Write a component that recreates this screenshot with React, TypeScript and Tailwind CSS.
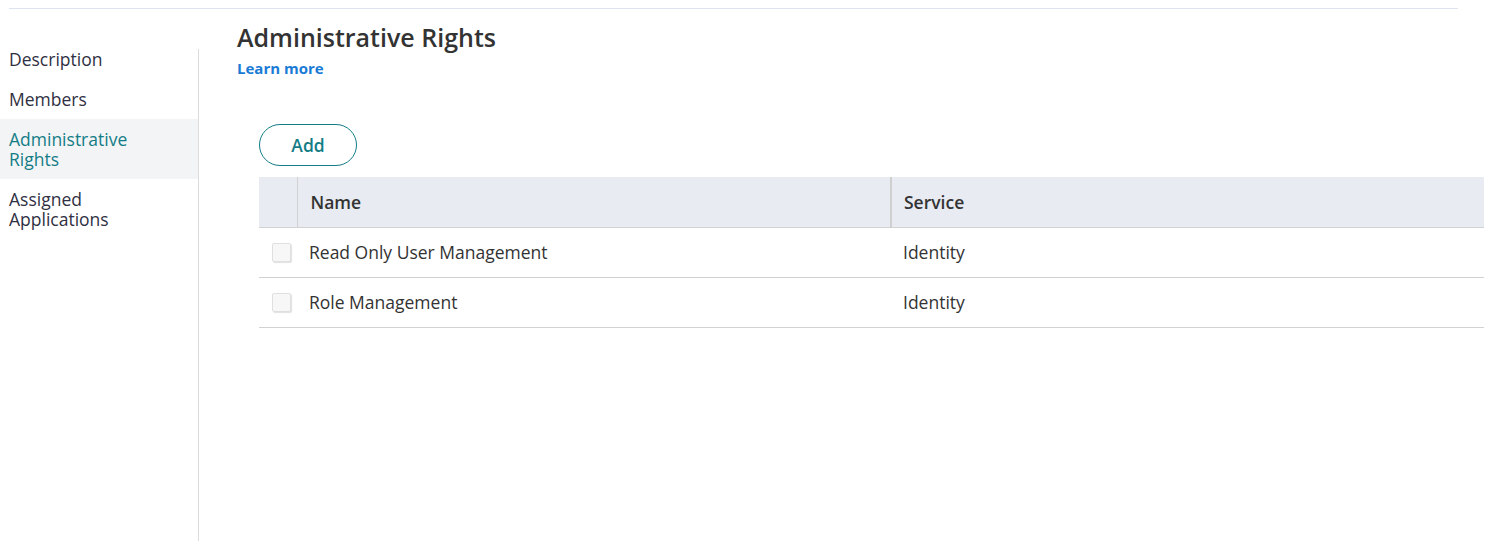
const navItems = ["Description", "Members", "Administrative Rights", "Assigned Applications"];

const rights = [
  { name: "Read Only User Management", service: "Identity" },
  { name: "Role Management", service: "Identity" },
];

function SideNav({ active }: { active: string }) {
  return (
    <nav className="-mt-[10px]">
      <ul>
        {navItems.map((item) => (
          <li
            key={item}
            className={`pl-[9px] pr-4 py-[10px] text-[17.5px] leading-[20px] ${
              item === active ? "bg-[#f3f4f6] text-[#137d86]" : "text-[#2f3042]"
            }`}
          >
            {item === "Administrative Rights" ? (
              <>Administrative<br />Rights</>
            ) : item === "Assigned Applications" ? (
              <>Assigned<br />Applications</>
            ) : (
              item
            )}
          </li>
        ))}
      </ul>
    </nav>
  );
}

function Checkbox() {
  return (
    <span className="block w-[19px] h-[19px] border border-[#e0e0e0] bg-[#f7f7f7] rounded-[2px] shadow-[1px_1px_1px_rgba(0,0,0,0.12)]" />
  );
}

export default function App() {
  return (
    <div className="h-[541px] bg-white font-['Open_Sans',sans-serif] overflow-hidden">
      <div className="ml-[9px] mr-[29px] pt-[8px] border-b border-[#dde3ee]" />
      <div className="flex h-[532px]">
        <aside className="w-[199px] shrink-0 mt-[40px] border-r border-[#dcdcdc]">
          <SideNav active="Administrative Rights" />
        </aside>
        <main className="flex-1 pl-[38px]">
          <h1 className="text-[25px] leading-[32px] font-semibold text-[#333] mt-[12px]">Administrative Rights</h1>
          <a className="block text-[15px] leading-[20px] font-bold text-[#1a7bd6] mt-[5px]">Learn more</a>

          <div className="pl-[22px] mt-[46px] pr-[3px]">
            <button className="w-[98px] h-[42px] rounded-full border border-[#137d86] text-[#137d86] text-[17.5px] font-semibold">
              Add
            </button>

            <table className="w-full mt-[11px] border-collapse text-[17.5px] text-[#333]">
              <thead>
                <tr className="bg-[#e8ebf2] h-[50px] border-b border-[#d2d2d2]">
                  <th className="w-[38px] border-r border-[#d2d2d2]" />
                  <th className="w-[594px] text-left font-semibold pl-[13px] border-r-2 border-[#cfcfcf]">Name</th>
                  <th className="text-left font-semibold pl-[12px]">Service</th>
                </tr>
              </thead>
              <tbody>
                {rights.map((r) => (
                  <tr key={r.name} className="h-[50px] border-b border-[#d2d2d2]">
                    <td className="pl-[13px]">
                      <Checkbox />
                    </td>
                    <td className="pl-[12px]">{r.name}</td>
                    <td className="pl-[12px]">{r.service}</td>
                  </tr>
                ))}
              </tbody>
            </table>
          </div>
        </main>
      </div>
    </div>
  );
}
